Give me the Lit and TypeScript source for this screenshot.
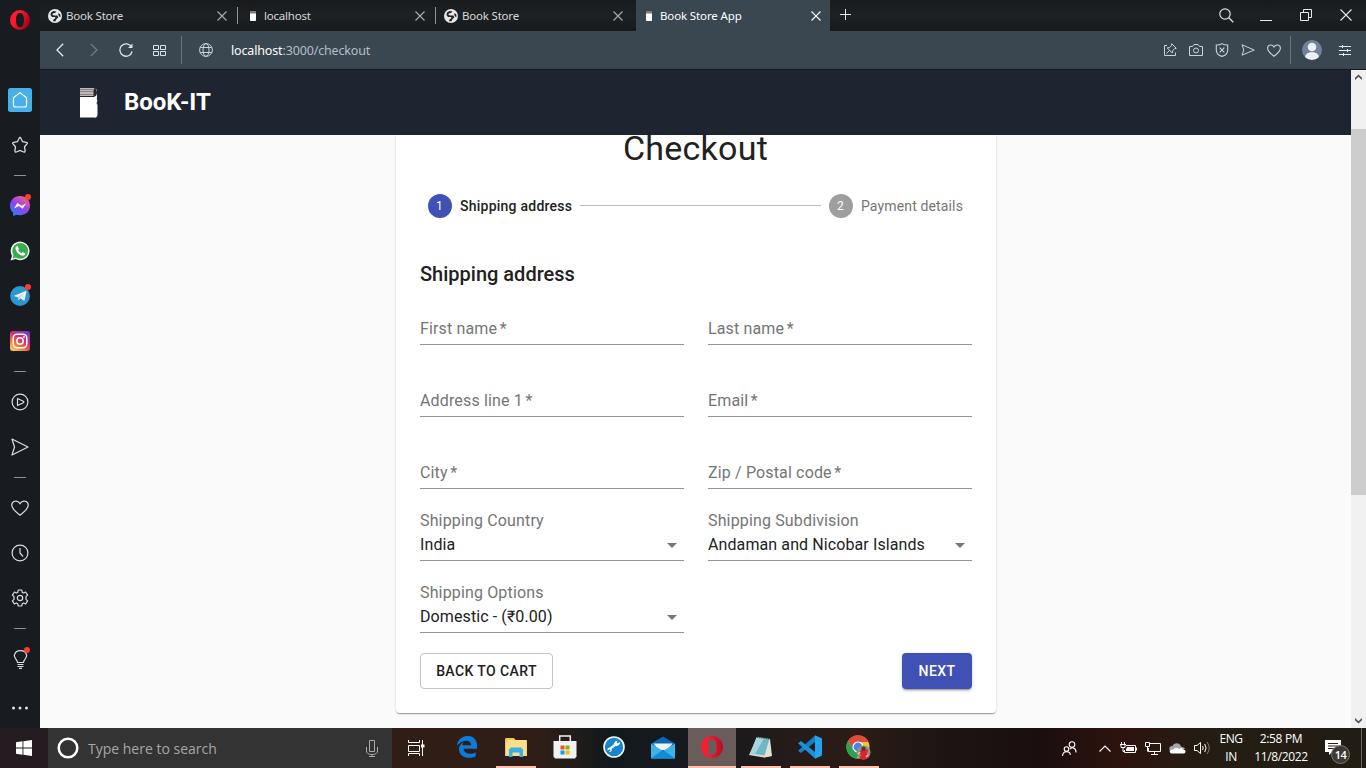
import { LitElement, html, css, svg, type TemplateResult } from "lit";
import { customElement, property } from "lit/decorators.js";

const icon = (w: number, h: number, body: unknown) =>
  html`<svg class="ic" width=${w} height=${h} viewBox="0 0 ${w} ${h}" fill="none">${body}</svg>`;

const BOOK = svg`<path d="M0 0H14L17 2V8Q16.500 11 17.500 13L16.500 15L17.500 17V27Q17 30 14 30H0Z" fill="#fff"/>
  <path d="M0 0H14Q17 1 17 4.500Q17 8 14 9H0Z" fill="#2b2629"/>
  <path d="M0 .8H14M0 2.800H13.500M0 5H13.500M0 7.200H13.500" stroke="#eee6e6" stroke-width="1.300"/>
  <path d="M0 29.500H15" stroke="#8b929b"/>`;

const ICONS: Record<string, TemplateResult> = {
  opera: icon(20, 20, svg`<defs><linearGradient id="o" x1="0" x2="1" y1="0" y2=".6"><stop offset=".4" stop-color="#ff1b2d"/><stop offset="1" stop-color="#a30416"/></linearGradient></defs><path fill-rule="evenodd" fill="url(#o)" d="M10 0A10 10 0 1 0 10 20A10 10 0 1 0 10 0M10 2.700C12.700 2.700 14 6 14 10S12.700 17.300 10 17.300S6 14 6 10S7.300 2.700 10 2.700"/>`),
  home: icon(24, 24, svg`<rect width="24" height="24" rx="2.500" fill="#45b1e8"/><path d="M12 4.600L18.500 9.800V17Q18.500 19 16.500 19H7.500Q5.500 19 5.500 17V9.800Z" stroke="#fff" stroke-width="1.200" stroke-linejoin="round"/>`),
  star: icon(18, 18, svg`<path d="M9 1.500Q9.600 1.500 10 2.500L11.600 5.700L15.300 6.300Q17 6.700 16 7.900L13.500 10.700L14.100 14.700Q14.100 16.500 12.600 16L9 14.400L5.400 16Q3.900 16.500 3.900 14.700L4.500 10.700L2 7.900Q1 6.700 2.700 6.300L6.400 5.700L8 2.500Q8.400 1.500 9 1.500Z" stroke="#d9dde0" stroke-width="1.300"/>`),
  messenger: icon(20, 20, svg`<defs><linearGradient id="m" x1=".1" y1="1" x2=".8" y2="0"><stop stop-color="#1688ff"/><stop offset=".5" stop-color="#9140f4"/><stop offset="1" stop-color="#ff6478"/></linearGradient></defs><path d="M10 0C4.300 0 0 4.200 0 9.700C0 12.600 1.200 15 3.100 16.700V20L6.500 18.800C13.500 20.700 20 16.400 20 9.700C20 4.200 15.700 0 10 0Z" fill="url(#m)"/><path d="M4 12.400L7.400 7L11.500 9.800L16 7.500L12.600 12.700L8.800 10Z" fill="#fff"/>`),
  whatsapp: icon(20, 20, svg`<path d="M.5 19.500L2 14.700A9.400 9.400 0 1 1 5.500 18.100Z" fill="#f4f4f4"/><circle cx="10.200" cy="9.800" r="7.900" fill="#37ad4d"/><path d="M2.600 17.500L3.500 14L6 16.500Z" fill="#37ad4d"/><path d="M6.300 5.600L7.700 5L9 7.900L8.200 9C9 10.600 10 11.500 11.500 12.200L12.600 11L15.300 12.400C15.100 14.200 13.700 15 12 14.600C8.600 13.700 6.200 11.200 5.600 8.300C5.300 7 5.700 6.100 6.300 5.600Z" fill="#fff"/>`),
  telegram: icon(20, 20, svg`<circle cx="10" cy="10" r="9.900" fill="#2a97ce"/><path d="M3.500 9.900L15.600 5Q16.700 4.800 16.400 5.900L14.400 15.100L10.300 12.300L8.200 14.300L7.800 11.300Z" fill="#e9f2f7"/><path d="M7.900 11.300L14 7L9.300 12L8.200 14.300Z" fill="#b2cfdf"/>`),
  instagram: icon(20, 20, svg`<defs><linearGradient id="i" x1=".1" y1="1" x2=".8" y2="0"><stop stop-color="#fdd163"/><stop offset=".3" stop-color="#f7812c"/><stop offset=".6" stop-color="#d72e78"/><stop offset="1" stop-color="#773bc1"/></linearGradient></defs><rect width="20" height="20" rx="3" fill="url(#i)"/><rect x="3.200" y="3.200" width="13.600" height="13.600" rx="4" stroke="#fff" stroke-width="1.500"/><circle cx="10" cy="10" r="3.200" stroke="#fff" stroke-width="1.500"/><circle cx="14" cy="6" r=".9" fill="#fff"/>`),
  play: icon(18, 18, svg`<circle cx="9" cy="9" r="7.900" stroke="#d9dde0" stroke-width="1.200"/><path d="M6.500 5.500L12.300 8.300Q13.300 9 12.300 9.700L6.500 12.500Z" stroke="#d9dde0" stroke-width="1.200" stroke-linejoin="round"/>`),
  send: icon(18, 18, svg`<path d="M1 1L17 9L1 17L3.500 9Z" stroke="#d9dde0" stroke-width="1.200" stroke-linejoin="round"/>`),
  heart: icon(18, 16, svg`<path d="M9 15.200C4 11.500.7 8.600.7 5.100C.7 1.100 6.300-.7 9 3.600C11.700-.7 17.300 1.100 17.300 5.100C17.300 8.600 14 11.500 9 15.200Z" stroke="#d9dde0" stroke-width="1.200"/>`),
  clock: icon(18, 18, svg`<circle cx="9" cy="9" r="7.900" stroke="#d9dde0" stroke-width="1.200"/><path d="M9 4V9L12 12.500" stroke="#d9dde0" stroke-width="1.200"/>`),
  gear: icon(18, 18, svg`<path d="M7.200 1H10.800L11.200 3.200L12.500 4L14.600 3L16.600 6.100L15 7.700V10.300L16.600 11.900L14.600 15L12.500 14L11.200 14.800L10.800 17H7.200L6.800 14.800L5.500 14L3.400 15L1.400 11.900L3 10.300V7.700L1.400 6.100L3.400 3L5.500 4L6.800 3.200Z" stroke="#d9dde0" stroke-width="1.200" stroke-linejoin="round"/><circle cx="9" cy="9" r="2.700" stroke="#d9dde0" stroke-width="1.200"/>`),
  bulb: icon(18, 20, svg`<path d="M6.500 13.500C6.500 10.500 3.300 10 3.300 6.300A6.300 5.800 0 0 1 15.700 6.300C15.700 10 12.500 10.500 12.500 13.500Z" stroke="#d9dde0" stroke-width="1.200"/><path d="M6.500 15.500H12.500M6.500 17.500H12.500M8 19.400H11" stroke="#d9dde0" stroke-width="1.100"/>`),
  dots: icon(18, 4, svg`<circle cx="2.500" cy="2" r="1.500" fill="#e0e3e5"/><circle cx="9" cy="2" r="1.500" fill="#e0e3e5"/><circle cx="15.500" cy="2" r="1.500" fill="#e0e3e5"/>`),
  globeFill: icon(14, 14, svg`<circle cx="7" cy="7" r="7" fill="#e4e8eb"/><path d="M3 3.500L5.500 2L8.500 2.500L7 4L4.700 4.500L4.500 6L6.500 6.500H9.500L10.300 8.600L8.500 10L7.500 12.200L5 12.300L5.500 10.500L7.500 9L7 8L4 8L2.500 6ZM10 4.200L12 5L12.700 7.500L11.500 8L10.600 6.500Z" fill="#202427"/>`),
  bookMini: icon(14, 14, svg`<rect x="4" y="2" width="6" height="10" rx=".8" fill="#fff"/><path d="M4 2H10V4.500H4Z" fill="#817d79"/>`),
  close: icon(10, 10, svg`<path d="M.5.5L9.500 9.500M9.500.5L.5 9.500" stroke="currentColor" stroke-width="1.100"/>`),
  plus: icon(11, 11, svg`<path d="M5.500 0V11M0 5.500H11" stroke="#e6e8ea"/>`),
  search: icon(15, 15, svg`<circle cx="6" cy="6" r="5.200" stroke="#dfe2e4" stroke-width="1.200"/><path d="M9.800 9.800L14.300 14.300" stroke="#dfe2e4" stroke-width="1.300"/>`),
  min: icon(12, 13, svg`<path d="M0 11.500H12" stroke="#e6e8ea"/>`),
  restore: icon(12, 12, svg`<path d="M.5 3.500H8.500V11.500H.5ZM3.500 3V.5H11.500V8.500H9" stroke="#e6e8ea"/>`),
  winClose: icon(12, 12, svg`<path d="M.5.5L11.500 11.500M11.500.5L.5 11.500" stroke="#e6e8ea" stroke-width="1.100"/>`),
  back: icon(8, 14, svg`<path d="M7.200.8L1 7L7.200 13.200" stroke="#e6e9eb" stroke-width="1.300"/>`),
  fwd: icon(8, 14, svg`<path d="M.8.8L7 7L.8 13.200" stroke="#77828b" stroke-width="1.200"/>`),
  reload: icon(14, 14, svg`<path d="M12.600 4.200A6.200 6.200 0 1 0 13.100 8.500" stroke="#dfe3e6" stroke-width="1.300"/><path d="M13.500.5V5H9Z" fill="#dfe3e6"/>`),
  speed: icon(13, 11, svg`<path d="M.5.5H5.500V4.500H.5ZM7.500.5H12.500V4.500H7.500ZM.5 6.500H5.500V10.500H.5ZM7.500 6.500H12.500V10.500H7.500Z" stroke="#dfe3e6"/>`),
  globe: icon(14, 14, svg`<g stroke="#cdd3d8"><circle cx="7" cy="7" r="6.400"/><ellipse cx="7" cy="7" rx="3" ry="6.400"/><path d="M1.300 4.500H12.700M1.300 9.500H12.700"/></g>`),
  pin: icon(14, 14, svg`<g stroke="#cdd3d8"><path d="M4 2.500H1.500V12.500H12.500V9.500"/><path d="M8.700.7L13.300 5.300L11.700 5.600L9.700 7.600L9.300 10L4.200 4.900L6.700 4.500L8.500 2.500ZM6.700 7.300L3.500 10.500"/></g>`),
  camera: icon(14, 14, svg`<g stroke="#cdd3d8"><path d="M.5 3.500H3.500L5 1.500H9L10.500 3.500H13.500V12.500H.5Z" stroke-linejoin="round"/><circle cx="7" cy="7.500" r="2.500"/></g>`),
  shield: icon(14, 14, svg`<g stroke="#cdd3d8" stroke-width="1.100"><path d="M7 .6C9 2 11 2 12.700 2V7C12.700 10.500 10 12.600 7 13.400C4 12.600 1.300 10.500 1.300 7V2C3 2 5 2 7 .6Z"/><path d="M4.700 4.700L9.300 9.300M9.300 4.700L4.700 9.300"/></g>`),
  plane: icon(14, 12, svg`<path d="M1 .8L13.200 6L1 11.200L2.800 6Z" stroke="#cdd3d8" stroke-linejoin="round"/>`),
  heartSm: icon(14, 13, svg`<path d="M7 12.200C3 9.200.6 7 .6 4.200C.6.600 5.300-.2 7 3C8.700-.2 13.400.6 13.400 4.200C13.400 7 11 9.200 7 12.200Z" stroke="#cdd3d8" stroke-width="1.100"/>`),
  user: icon(20, 20, svg`<defs><clipPath id="u"><circle cx="10" cy="10" r="10"/></clipPath></defs><g clip-path="url(#u)"><rect width="20" height="20" fill="#71829a"/><circle cx="10" cy="7" r="4.300" fill="#edf1f6"/><ellipse cx="10" cy="17.300" rx="7" ry="5.300" fill="#edf1f6"/></g>`),
  sliders: icon(12, 11, svg`<path d="M0 1.500H12M0 5.500H12M0 9.500H12M3.500 0V3M8.500 4V7M4.500 8V11" stroke="#e6e9eb"/>`),
  win: icon(16, 16, svg`<path d="M0 2.200L6.500 1.300V7.500H0ZM7.400 1.200L16 0V7.500H7.400ZM0 8.400H6.500V14.700L0 13.800ZM7.400 8.400H16V16L7.400 14.800Z" fill="#fff"/>`),
  cortana: icon(22, 22, svg`<circle cx="11" cy="11" r="9.300" stroke="#fff" stroke-width="2.500"/>`),
  mic: icon(12, 17, svg`<path d="M3.500.5H8.500V11.500H3.500ZM.5 7V11Q.5 14.500 6 14.500T11.500 11V7M6 14.500V16.500M3 16.500H9" stroke="#a9a9a9"/>`),
  task: icon(17, 16, svg`<g stroke="#fff"><path d="M.5 0V2.500H11.500V0M.5 16V13.500H11.500V16M.5 5.500H11.500V11.500H.5Z"/><path d="M14.500 0V16"/></g><path d="M13 4.500H16.500V7.500H13Z" fill="#fff"/>`),
  edge: icon(20, 22, svg`<path d="M0 9.500C1-2.500 20-4 20 9.500V12.800H6.500C7 18 14 19 18.700 16.200V20.300C11 24 2 21 2 13C2 9.800 4 7.300 7 6.300C5.200 8 4.900 8.800 6.400 9.300H14C14 3 5 3.500 0 9.500Z" fill="#0d7bdb"/>`),
  explorer: icon(22, 19, svg`<path d="M0 1L1 0H9L10.500 2H22V18H0Z" fill="#f2c64f"/><path d="M2 2H21V8H2Z" fill="#fbe28d"/><path d="M1 4H21.500V18H1Z" fill="#fbdf88"/><path d="M4 19V11.500L6 9.500H16L18 11.500V19H14.500V14.500H7.500V19Z" fill="#35b0ea"/>`),
  store: icon(24, 24, svg`<path d="M6.700 7V1H17.300V7" stroke="#f2f2f2" stroke-width="1.500"/><path d="M.5 6H23.500V21.500L22 23.500H2L.5 21.500Z" fill="#f1f1f1"/><path d="M7.500 10.500H11.500V14.500H7.500Z" fill="#f25022"/><path d="M12.500 10.500H16.500V14.500H12.500Z" fill="#7fba00"/><path d="M7.500 15.500H11.500V19.500H7.500Z" fill="#00a4ef"/><path d="M12.500 15.500H16.500V19.500H12.500Z" fill="#ffb900"/>`),
  tool: icon(22, 22, svg`<circle cx="11" cy="11" r="10" fill="#1684cf" stroke="#f4f8fb" stroke-width="1.600"/><path d="M5.800 16A2.700 2.700 0 0 0 8.800 12.800L12.800 9.700A3.200 3.200 0 0 0 17 6.100L14.700 7.500L13.500 6.300L14.900 4.800A3.200 3.200 0 0 0 11 8L7 11.500A2.700 2.700 0 0 0 4.500 14.600L6.700 13.300L7.600 14.400Z" fill="#fff"/>`),
  mail: icon(24, 23, svg`<path d="M0 7.500L12 .5L24 7.500V10H0Z" fill="#0b66b8"/><path d="M2.500 7.500H21.500L17 14H7Z" fill="#f3f3f3"/><path d="M0 7.500L12 15L24 7.500V22.500H0Z" fill="#38b4ec"/><path d="M0 22.500L12 13.800L24 22.500Z" fill="#168bd5"/>`),
  operaTask: icon(22, 22, svg`<defs><linearGradient id="ot" x1="0" x2="1"><stop offset=".3" stop-color="#fa1d31"/><stop offset="1" stop-color="#b90c1e"/></linearGradient></defs><path fill-rule="evenodd" fill="url(#ot)" d="M11 0A11 11 0 1 0 11 22A11 11 0 1 0 11 0M11.200 2.700C14.200 2.700 15.600 6.500 15.600 11S14.200 19.300 11.200 19.300S6.800 15.500 6.800 11S8.200 2.700 11.200 2.700"/>`),
  notepad: icon(23, 22, svg`<path d="M8 1L21 3L23 20L15 21.500L0 19Z" fill="#d4dbdc"/><path d="M7.500 1.500L20.500 3L16 19.500L1.500 17.500Z" fill="#70b7c5"/><path d="M7.500 1.500L15 2.500L6 18L1.500 17.500Z" fill="#a6d5de"/><path d="M20.500 3L22.500 20L15 21.500Z" fill="#e4e0cf"/><path d="M8 1.300L20.500 2.800" stroke="#394c50" stroke-width="1.300" stroke-dasharray="1.200 1"/>`),
  vscode: icon(24, 24, svg`<path d="M17 .3L24 3.500V20.500L17 23.700Z" fill="#24a4ed"/><path d="M17 .5V7L3 18L0 15.800Z" fill="#167fc4"/><path d="M0 8.200L3 6L17 17V23.500Z" fill="#1b91d9"/>`),
  chrome: icon(25, 25, svg`<circle cx="12" cy="12" r="11.500" fill="#f5c52f"/><path d="M2 6A11.500 11.500 0 0 1 22.500 7H12A5 5 0 0 0 7.500 14.500Z" fill="#df4a3b"/><path d="M2 6L7.700 15Q9.500 17.500 13 17L11 23.500A11.500 11.500 0 0 1 2 6Z" fill="#29a254"/><circle cx="12" cy="12" r="5.500" fill="#fff"/><circle cx="12" cy="12" r="4.400" fill="#4385ed"/><circle cx="17.500" cy="17.500" r="7" fill="#8b928c"/><path d="M13 17L17 13.500L22 15L21 19L22.500 22Q18 27 13.500 23L15 20Z" fill="#e5202b"/><circle cx="17.500" cy="13.800" r="2.200" fill="#57372e"/><path d="M14 17L12 19M20 22L22 20" stroke="#f1cabd" stroke-width="1.300"/>`),
  people: icon(15, 15, svg`<g stroke="#fff" stroke-width="1.100"><circle cx="10" cy="3.500" r="2.800"/><circle cx="4.500" cy="8" r="2.300"/><path d="M.6 15Q.6 10.700 4.500 10.700T8.300 14M8 8Q10 6 12 7.200Q14.300 8.500 14 11.500"/></g>`),
  up: icon(12, 7, svg`<path d="M.5 6.500L6 1L11.500 6.500" stroke="#fff" stroke-width="1.200"/>`),
  battery: icon(17, 12, svg`<path d="M6 3.500H15.500V10.500H4.500V8" stroke="#fff"/><path d="M7 5H14V9H6V7.500ZM15.500 5.500H17V8.500H15.500Z" fill="#fff"/><path d="M1.500 0V2.500M4.500 0V2.500M0 2.500H6M1 3V5.500H5V3M3 6V9.500H5" stroke="#fff"/>`),
  monitor: icon(16, 13, svg`<path d="M5 1.500H15.500V9.500H3.500V6M9.500 10V12M6 12.500H13M.5.5H4.500V4.500H.5ZM2.500 5V9.500" stroke="#fff"/>`),
  cloud: icon(17, 11, svg`<path d="M1 8C-1 4 2 3 3.500 3C5-.8 11-.5 12 3.500L16 5L12 10H3Z" fill="#a5a5a5"/><path d="M2 10.500C-.5 9 1 6 4 6.500Q7 3.500 10 6Q13 4 14 6.500Q17 6.500 16.500 9Q16 10.500 14.500 10.500Z" fill="#fff"/>`),
  speaker: icon(17, 14, svg`<path d="M.5 4.500H3L6.500 1.500V12.500L3 9.500H.5Z" stroke="#fff"/><path d="M8.500 5Q10 7 8.500 9M10.700 3Q13.500 7 10.700 11" stroke="#fff"/><path d="M13 1Q17.500 7 13 13" stroke="#7f7b74"/>`),
  note: icon(16, 15, svg`<path d="M0 0H16V12H7L4 15V12H0Z" fill="#fff"/><path d="M3 3.500H13M3 6H13M3 8.500H9" stroke="#2b2418"/>`),
  scrollUp: icon(7, 6, svg`<path d="M0 3.800L3.500.4L7 3.800V6L3.500 2.700L0 6Z" fill="#505050"/>`),
  scrollDown: icon(7, 6, svg`<path d="M0 2.200L3.500 5.600L7 2.200V0L3.500 3.300L0 0Z" fill="#505050"/>`),
  arrow: icon(10, 5, svg`<path d="M0 0H10L5 5Z" fill="#757575"/>`),
};

const shared = css`
  :host { display: block; box-sizing: border-box; }
  * { box-sizing: border-box; }
  .ic { display: block; flex: none; }
`;

@customElement("side-bar")
class SideBar extends LitElement {
  static styles = [shared, css`
    :host { background: #181c20; display: flex; flex-direction: column; width: 40px; }
    .logo { height: 77px; padding: 10px 0 0 10px; }
    .slot { height: 45px; display: flex; align-items: center; justify-content: center; }
    .wrap { position: relative; }
    .dot { position: absolute; right: -1px; top: -2px; width: 6px; height: 6px; border-radius: 50%; background: #ff3b30; }
    .sep { height: 16px; display: flex; align-items: center; justify-content: center; }
    .sep::after { content: ""; width: 12px; height: 1px; background: #8793a0; }
    .more { margin-top: auto; height: 40px; display: flex; align-items: center; justify-content: center; }
  `];
  render() {
    const items = ["home", "star", "-", "messenger!", "whatsapp", "telegram!", "instagram", "-", "play", "send", "-", "heart", "clock", "gear", "-", "bulb!"];
    return html`<div class="logo">${ICONS.opera}</div>
      ${items.map((n) => n === "-" ? html`<div class="sep"></div>` : html`<div class="slot"><div class="wrap">${ICONS[n.replace("!", "")]}${n.endsWith("!") ? html`<span class="dot"></span>` : ""}</div></div>`)}
      <div class="more">${ICONS.dots}</div>`;
  }
}

@customElement("browser-chrome")
class BrowserChrome extends LitElement {
  static styles = [shared, css`
    :host { font-family: "Noto Sans", "Open Sans", sans-serif; }
    .tabs { height: 31px; display: flex; background: linear-gradient(#181b1e, #1d2124 50%, #17191b); }
    .tab { width: 198px; display: flex; align-items: center; padding: 0 11px 0 8px; color: #d5d7d9; font-size: 11.500px; letter-spacing: -.2px; position: relative; }
    .tab:nth-child(-n+2)::after { content: ""; position: absolute; right: 0; top: 7px; width: 1px; height: 17px; background: #8f9599; }
    .tab.active { width: 194px; margin-left: 2px; padding-left: 6px; padding-right: 9px; background: #3a4650; color: #fff; letter-spacing: -.13px; }
    .name { flex: 1; margin-left: 4px; white-space: nowrap; line-height: 16px; }
    .x { color: #a9adb0; }
    .active .x { color: #fff; }
    .plus { padding: 9px 0 0 10px; flex: 1; }
    .wins { display: flex; }
    .wins > div { width: 40px; display: flex; align-items: center; justify-content: center; height: 30px; }
    .bar { height: 39px; background: #3a4650; border-bottom: 1px solid #15191d; display: flex; align-items: center; padding: 0 15px 0 16px; }
    .nav { display: flex; align-items: center; }
    .fwd { margin-left: 26px; }
    .reload { margin-left: 21px; }
    .speed { margin-left: 20px; }
    .line { width: 1px; height: 28px; background: #69747e; }
    .url { margin-left: 18px; flex: 1; color: #b3bfca; font-size: 12.500px; letter-spacing: -.15px; }
    .url b { font-weight: 400; color: #fff; }
    .tools { display: flex; align-items: center; gap: 12px; margin-right: 9px; }
    .end { display: flex; align-items: center; gap: 17px; margin-left: 11px; }
    .sep { margin-left: 15px; }
    .globe { margin-left: 17px; }
  `];
  render() {
    const tabs = [["globeFill", "Book Store"], ["bookMini", "localhost"], ["globeFill", "Book Store"], ["bookMini", "Book Store App"]];
    return html`<div class="tabs">
        ${tabs.map(([i, t], k) => html`<div class="tab ${k === 3 ? "active" : ""}">${ICONS[i]}<span class="name">${t}</span><span class="x">${ICONS.close}</span></div>`)}
        <div class="plus">${ICONS.plus}</div>
        <div class="wins"><div>${ICONS.search}</div><div>${ICONS.min}</div><div>${ICONS.restore}</div><div>${ICONS.winClose}</div></div>
      </div>
      <div class="bar">
        <div class="nav">${ICONS.back}<span class="fwd">${ICONS.fwd}</span><span class="reload">${ICONS.reload}</span><span class="speed">${ICONS.speed}</span></div>
        <span class="sep line"></span>
        <span class="globe">${ICONS.globe}</span>
        <div class="url"><b>localhost</b>:3000/checkout</div>
        <div class="tools">${ICONS.pin}${ICONS.camera}${ICONS.shield}${ICONS.plane}${ICONS.heartSm}</div>
        <span class="line"></span>
        <div class="end">${ICONS.user}${ICONS.sliders}</div>
      </div>`;
  }
}

@customElement("form-field")
class FormField extends LitElement {
  @property() label = "";
  @property() value = "";
  @property({ type: Boolean }) required = false;
  static styles = [shared, css`
    :host { align-self: end; border-bottom: 1px solid #949494; height: 48px; color: #757575; font-size: 16px; letter-spacing: .15px; line-height: 24px; padding-top: 20px; }
    :host([value]) { padding-top: 0; height: 52px; }
    .star { margin-left: 2.500px; }
    .row { display: flex; align-items: center; justify-content: space-between; color: #212121; padding-right: 7px; letter-spacing: .1px; }
  `];
  render() {
    return html`<div>${this.label}${this.required ? html`<span class="star">*</span>` : ""}</div>${this.value ? html`<div class="row"><span>${this.value}</span>${ICONS.arrow}</div>` : ""}`;
  }
}

@customElement("checkout-page")
class CheckoutPage extends LitElement {
  static styles = [shared, css`
    :host { font-family: Roboto, sans-serif; display: grid; grid-template-columns: 1fr 15px; min-height: 0; color: #212121; }
    .page { display: flex; flex-direction: column; min-height: 0; overflow: hidden; }
    .head { height: 65px; flex: none; background: #1e2430; color: #fff; display: flex; align-items: center; padding-left: 40px; font-size: 24px; font-weight: 700; }
    .head .ic { margin-top: 1px; }
    .head span { margin: 0 0 1px 25px; letter-spacing: -.05px; }
    .body { flex: 1; background: #fafafa; }
    .card { width: 600px; height: 578px; margin-left: 356px; padding: 0 24px; background: #fff; border-radius: 0 0 4px 4px; box-shadow: 0 2px 1px -1px rgba(0,0,0,.2), 0 1px 1px rgba(0,0,0,.14), 0 1px 3px rgba(0,0,0,.12); }
    h1 { margin: 0 0 9px; font-size: 34px; font-weight: 400; line-height: 26px; letter-spacing: .25px; text-align: center; padding-right: 1px; }
    .stepper { display: flex; align-items: center; padding: 24px 8px 40px; font-size: 14px; color: #757575; letter-spacing: .14px; }
    .num { width: 24px; height: 24px; border-radius: 50%; display: grid; place-items: center; color: #fff; background: #9e9e9e; font-size: 12px; margin-right: 8px; padding-right: 1px; }
    .on .num { background: #3f51b5; font-weight: 400; }
    .step { display: flex; align-items: center; padding-right: 1px; }
    .step.on { color: #212121; font-weight: 500; letter-spacing: .24px; padding: 0; }
    .rule { flex: 1; height: 1px; background: #bdbdbd; margin: 0 8px 1px; }
    h2 { margin: 0 0 7px; font-size: 20px; line-height: 32px; font-weight: 500; letter-spacing: 0; }
    .fields { display: grid; grid-template-columns: 264px 264px; column-gap: 24px; grid-template-rows: 48px repeat(4, 72px); }
    .actions { display: flex; justify-content: space-between; margin-top: 20px; }
    button { height: 36px; font: 500 14px Roboto, sans-serif; letter-spacing: .4px; border-radius: 4px; padding: 0 15px; border: 1px solid #c4c4c4; background: #fff; color: #212121; white-space: nowrap; }
    .next { background: #3f51b5; border: 0; color: #fff; width: 70px; box-shadow: 0 3px 1px -2px rgba(0,0,0,.2), 0 2px 2px rgba(0,0,0,.14), 0 1px 5px rgba(0,0,0,.12); }
    .back { width: 133px; }
    .scroll { background: #f0f0f0; display: flex; flex-direction: column; align-items: center; padding: 4px 0; }
    .thumb { width: 15px; height: 366px; margin: 49px 0 auto; background: #cdcdcd; }
  `];
  render() {
    return html`<div class="page">
        <div class="head">${icon(19, 30, BOOK)}<span>BooK-IT</span></div>
        <div class="body"><div class="card">
          <h1>Checkout</h1>
          <div class="stepper"><div class="step on"><span class="num">1</span>Shipping address</div><span class="rule"></span><div class="step"><span class="num">2</span>Payment details</div></div>
          <h2>Shipping address</h2>
          <div class="fields">
            <form-field required label="First name"></form-field><form-field required label="Last name"></form-field>
            <form-field required label="Address line 1"></form-field><form-field required label="Email"></form-field>
            <form-field required label="City"></form-field><form-field required label="Zip / Postal code"></form-field>
            <form-field label="Shipping Country" value="India"></form-field><form-field label="Shipping Subdivision" value="Andaman and Nicobar Islands"></form-field>
            <form-field label="Shipping Options" value="Domestic - (₹0.00)"></form-field>
          </div>
          <div class="actions"><button class="back">BACK TO CART</button><button class="next">NEXT</button></div>
        </div></div>
      </div>
      <div class="scroll">${ICONS.scrollUp}<div class="thumb"></div>${ICONS.scrollDown}</div>`;
  }
}

@customElement("task-bar")
class TaskBar extends LitElement {
  static styles = [shared, css`
    :host { height: 40px; display: flex; font-family: "Open Sans", "Noto Sans", sans-serif; color: #fff; background: linear-gradient(90deg, #241c20 0, #241c20 48px, #301d16 392px, #2e1e17 540px, #12191c 610px, #14191d 670px, #241b1a 790px, #2b1c16 860px, #1c1513 940px, #1b0e0f 1040px, #2d130e 1120px, #241d14 1210px, #211c14 100%); }
    .start { width: 48px; display: grid; place-items: center; }
    .search { width: 344px; background: #333; display: flex; align-items: center; padding: 0 14px 0 9px; color: #a6a6a6; font-size: 14px; }
    .search span { flex: 1; margin-left: 9px; }
    .tv { width: 50px; padding: 12px 0 0 16px; }
    .app { width: 49px; display: flex; flex-direction: column; align-items: center; }
    .glyph { flex: 1; display: flex; align-items: center; }
    .run { width: 40px; height: 2px; background: transparent; }
    .open .run { background: #fbc0ae; }
    .cur { width: 48px; margin-left: 1px; background: #695c5a; }
    .cur .run { width: 48px; }
    .tray { margin-left: auto; display: flex; align-items: center; font-size: 12px; line-height: 18px; text-align: center; }
    .icons { display: flex; align-items: center; gap: 8px; }
    .ppl { margin-right: 22px; }
    .up { margin-right: 9px; }
    .lang { width: 40px; letter-spacing: -.4px; }
    .time { width: 60px; letter-spacing: -.35px; }
    .note { width: 50px; height: 40px; padding: 12px 0 0 14px; position: relative; }
    .count { position: absolute; left: 20px; top: 17px; width: 19px; height: 19px; border-radius: 50%; background: #3e3934; border: 1px solid #77736e; font-size: 11px; line-height: 17px; font-weight: 600; letter-spacing: -.5px; }
    .edge { width: 1px; height: 40px; background: #69645e; margin-right: 4px; }
  `];
  render() {
    const apps = [["edge", ""], ["explorer", "open"], ["store", ""], ["tool", ""], ["mail", ""], ["operaTask", "open cur"], ["notepad", "open"], ["vscode", "open"], ["chrome", "open"]];
    return html`<div class="start">${ICONS.win}</div>
      <div class="search">${ICONS.cortana}<span>Type here to search</span>${ICONS.mic}</div>
      <div class="tv">${ICONS.task}</div>
      ${apps.map(([n, c]) => html`<div class="app ${c}"><div class="glyph">${ICONS[n]}</div><div class="run"></div></div>`)}
      <div class="tray">
        <span class="ppl">${ICONS.people}</span><span class="up">${ICONS.up}</span>
        <div class="icons">${ICONS.battery}${ICONS.monitor}${ICONS.cloud}${ICONS.speaker}</div>
        <div class="lang">ENG<br>IN</div><div class="time">2:58 PM<br>11/8/2022</div>
        <div class="note">${ICONS.note}<span class="count">14</span></div><span class="edge"></span>
      </div>`;
  }
}

@customElement("app-root")
class AppRoot extends LitElement {
  static styles = [shared, css`
    :host { width: 1366px; height: 768px; overflow: hidden; display: grid; grid-template-rows: 728px 40px; }
    .top { display: grid; grid-template-columns: 40px 1326px; min-height: 0; }
    .win { display: grid; grid-template-rows: 70px 658px; }
  `];
  render() {
    return html`<div class="top"><side-bar></side-bar><div class="win"><browser-chrome></browser-chrome><checkout-page></checkout-page></div></div><task-bar></task-bar>`;
  }
}
